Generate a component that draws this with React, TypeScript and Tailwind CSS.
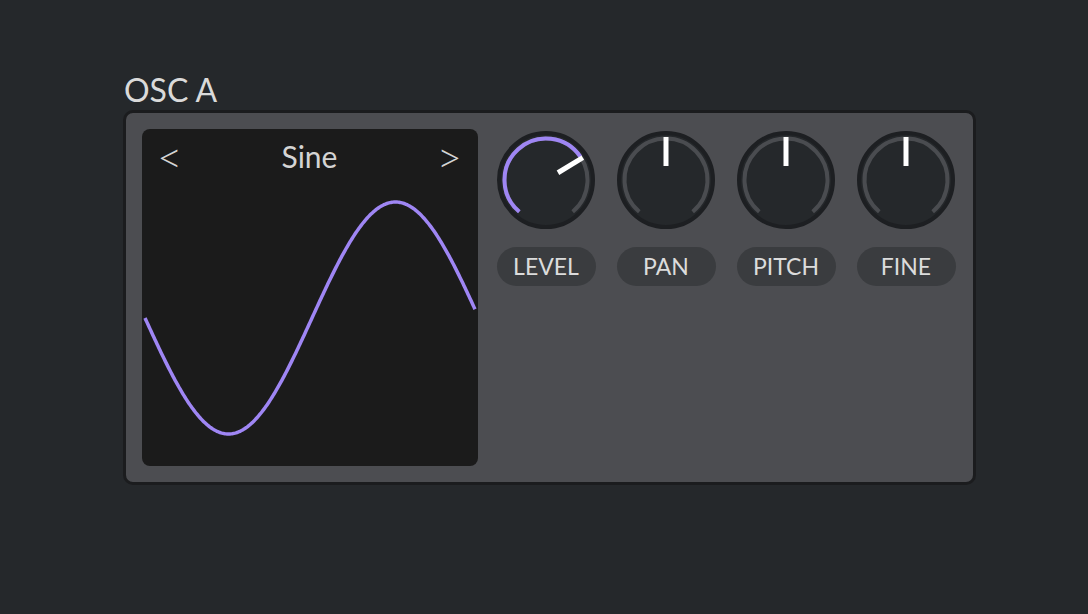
import type { JSX } from 'react';

const PURPLE = '#9f86f4';

const KNOBS = [
  { label: 'LEVEL', value: 0.71, fill: true },
  { label: 'PAN', value: 0.5, fill: false },
  { label: 'PITCH', value: 0.5, fill: false },
  { label: 'FINE', value: 0.5, fill: false },
];

const SWEEP = 140;

function polar(cx: number, cy: number, r: number, deg: number): [number, number] {
  const a = ((deg - 90) * Math.PI) / 180;
  return [cx + r * Math.cos(a), cy + r * Math.sin(a)];
}

function arcPath(cx: number, cy: number, r: number, from: number, to: number): string {
  const [x1, y1] = polar(cx, cy, r, from);
  const [x2, y2] = polar(cx, cy, r, to);
  const large = to - from > 180 ? 1 : 0;
  return `M ${x1.toFixed(2)} ${y1.toFixed(2)} A ${r} ${r} 0 ${large} 1 ${x2.toFixed(2)} ${y2.toFixed(2)}`;
}

function Knob({ value, fill }: { value: number; fill: boolean }): JSX.Element {
  const angle = -SWEEP + value * SWEEP * 2;
  const [px1, py1] = polar(49, 49, 14, angle);
  const [px2, py2] = polar(49, 49, 43, angle);
  return (
    <svg width="98" height="98" viewBox="0 0 98 98">
      <circle cx="49" cy="49" r="47" fill="#25282b" stroke="#1d1f22" strokeWidth="4" />
      <path d={arcPath(49, 49, 41.5, -SWEEP, SWEEP)} fill="none" stroke="#4a4c50" strokeWidth="4" />
      {fill && (
        <path d={arcPath(49, 49, 41.5, -SWEEP, angle - 3)} fill="none" stroke={PURPLE} strokeWidth="4" />
      )}
      <line x1={px1} y1={py1} x2={px2} y2={py2} stroke="#ffffff" strokeWidth="5" />
    </svg>
  );
}

function wavePath(): string {
  const pts: string[] = [];
  for (let x = 3; x <= 333; x += 1) {
    const y = 135 + 116 * Math.sin((2 * Math.PI * (x - 3)) / 334);
    pts.push(`${x === 3 ? 'M' : 'L'} ${x} ${y.toFixed(2)}`);
  }
  return pts.join(' ');
}

export default function App(): JSX.Element {
  return (
    <div
      className="h-[614px] w-full bg-[#25282b] pl-[123px] pt-[69px]"
      style={{ fontFamily: 'Lato, "Noto Sans", sans-serif' }}
    >
      <h1 className="pl-[1px] text-[32px] leading-[41px] text-[#dadada]">OSC A</h1>

      <div className="flex w-[853px] gap-[19px] rounded-[10px] border-[3px] border-[#1b1c1e] bg-[#4c4d51] p-4">
        {/* Waveform display */}
        <div className="flex h-[337px] w-[336px] flex-col rounded-lg bg-[#1b1b1b]">
          <div className="flex h-[54px] items-center justify-between pl-[15px] pr-[16px] text-[#d4d4d4]">
            <span className="text-[44px] font-light leading-none">&lt;</span>
            <span className="text-[30px] leading-none">Sine</span>
            <span className="text-[44px] font-light leading-none">&gt;</span>
          </div>
          <svg width="336" height="283" viewBox="0 0 336 283">
            <path d={wavePath()} fill="none" stroke={PURPLE} strokeWidth="3.5" />
          </svg>
        </div>

        {/* Knobs */}
        <div className="mt-[2px] flex items-start gap-[22px]">
          {KNOBS.map(k => (
            <div key={k.label} className="flex w-[98px] flex-col items-center gap-[18px]">
              <Knob value={k.value} fill={k.fill} />
              <div className="flex h-[39px] w-[99px] items-center justify-center rounded-full bg-[#3a3c3f] text-[23px] text-[#dcdcdc]">
                {k.label}
              </div>
            </div>
          ))}
        </div>
      </div>
    </div>
  );
}
